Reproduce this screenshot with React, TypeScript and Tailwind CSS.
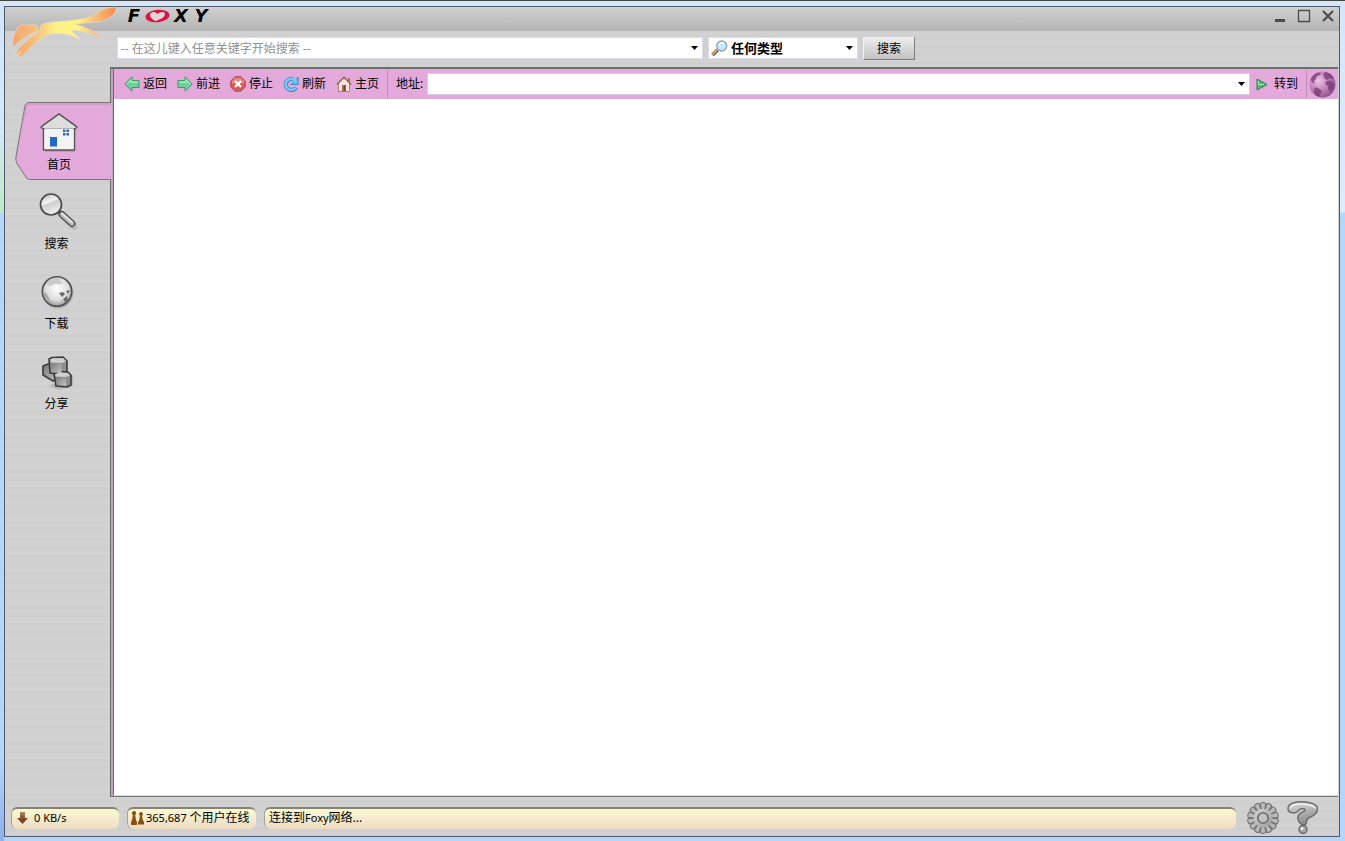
import type { ReactNode } from 'react';

function DropArrow() {
  return (
    <svg width="7" height="4" viewBox="0 0 7 4" aria-hidden="true">
      <path d="M0 0h7L3.500 4z" fill="#000" />
    </svg>
  );
}

function FoxLogo() {
  return (
    <svg width="112" height="56" viewBox="8 5 112 56" aria-hidden="true" className="absolute left-[3px] -top-0.5">
      <defs>
        <linearGradient id="fox" x1="12" x2="116" y1="0" y2="0" gradientUnits="userSpaceOnUse">
          <stop offset="0" stopColor="#f2a571" />
          <stop offset="0.22" stopColor="#f6bf78" />
          <stop offset="0.42" stopColor="#fdf288" />
          <stop offset="0.64" stopColor="#fff27e" />
          <stop offset="0.8" stopColor="#f9bd78" />
          <stop offset="1" stopColor="#f58d52" />
        </linearGradient>
      </defs>
      <g fill="url(#fox)" stroke="#e0d8ce" strokeWidth="1.400" paintOrder="stroke" strokeLinejoin="round">
        <path d="M13 47C12 40 16 29 20 26c3-2.500 7-2 6.500.5C30 24 36 24 38 27c.5 3-2 5-5 6-8 3-14 8-20 14z" />
        <path d="M39.500 32c2-3-.5-5.500 3-7.500 6-2.500 20-2.500 30-4 10-1 19-2.500 25-7C103 9 107 7.500 116 7.500c-.5 3-1 5-3 7-5 5-12 7-20 7.500-6 .5-12 1-19 1.800 10 3.500 20 7 28.500 14.700-9-5-19-8-29-8.500-2 0-2 1.500-.5 3 2 2 5 4 6.500 6.200-8-4.500-16-6.700-25-6-7 .8-12 3-17 8C31 46 27 53 19 58c.5-3 1.500-5.500 3-8l-6 5c1-4 3-7 6-10 5-5 11-9 17.500-13z" />
      </g>
    </svg>
  );
}

function Wordmark() {
  return (
    <a href="#foxy" aria-label="FOXY" className="flex items-center h-[18px] gap-0.5 pl-1.5 font-['DejaVu_Sans'] text-lg/[18px] font-bold italic text-black">
      <span className="w-[18px] text-center">F</span>
      <svg width="25" height="14" viewBox="0 0 25 14" aria-hidden="true">
        <ellipse cx="12.500" cy="7" rx="12" ry="6.200" fill="#dc1446" transform="rotate(-6 12.500 7)" />
        <path d="M10.500 12C5 9 4 6 6 4c2-2 5-1 6.500 1 2-2 6-3 7-1 2 3-3 6-9 8z" fill="#e4d6d9" />
      </svg>
      <span className="w-[18px] text-center">X</span>
      <span className="w-[18px] text-center">Y</span>
    </a>
  );
}

function HouseIcon() {
  return (
    <svg width="40" height="40" viewBox="0 0 40 40" aria-hidden="true">
      <path d="M5 14h30v25H5z" fill="#000" opacity=".12" transform="translate(1 1)" />
      <path d="M4.500 13 20 2l15.500 11v25h-31z" fill="#f4f4f4" stroke="#555" strokeWidth="1.500" strokeLinejoin="round" />
      <path d="M20 2 2 15l2 2h32l2-2z" fill="#ddd" stroke="#555" strokeWidth="1.500" strokeLinejoin="round" />
      <path d="M5.500 16.500h29V37h-29z" fill="#f3f3f3" />
      <path d="M11 25h7v9.500h-7z" fill="#2268c8" />
      <path d="M24 17.500h2.500V20H24zM27.500 17.500H30V20h-2.500zM24 21h2.500v2.500H24zM27.500 21H30v2.500h-2.500z" fill="#2268c8" />
    </svg>
  );
}

function MagnifierIcon() {
  return (
    <svg width="40" height="40" viewBox="0 0 40 40" aria-hidden="true">
      <defs>
        <linearGradient id="lens" x1="0" x2="0.400" y1="0" y2="1">
          <stop offset="0" stopColor="#b5b5b5" />
          <stop offset=".45" stopColor="#f4f4f4" />
          <stop offset=".55" stopColor="#cfcfcf" />
          <stop offset="1" stopColor="#eee" />
        </linearGradient>
      </defs>
      <path d="m26 25 11 10" stroke="#000" opacity=".1" strokeWidth="6" strokeLinecap="round" />
      <path d="m21 19 5 4" stroke="#4c4c4c" strokeWidth="4" />
      <path d="m25 22.500 10 9" stroke="#4c4c4c" strokeWidth="7" strokeLinecap="round" />
      <path d="m25 22.500 10 9" stroke="#b4b4b4" strokeWidth="4.400" strokeLinecap="round" />
      <path d="m25 21.500 10 9" stroke="#eee" strokeWidth="1.600" strokeLinecap="round" />
      <circle cx="14" cy="12.500" r="10.500" fill="url(#lens)" stroke="#4c4c4c" strokeWidth="1.700" />
    </svg>
  );
}

function GlobeIcon() {
  return (
    <svg width="40" height="40" viewBox="0 0 40 40" aria-hidden="true">
      <defs>
        <radialGradient id="globe" cx=".5" cy=".4" r=".65">
          <stop offset="0" stopColor="#fff" />
          <stop offset=".6" stopColor="#ddd" />
          <stop offset="1" stopColor="#888" />
        </radialGradient>
      </defs>
      <circle cx="21" cy="21" r="15.500" fill="#000" opacity=".15" />
      <circle cx="20" cy="19.500" r="14.700" fill="url(#globe)" stroke="#4f4f4f" strokeWidth="1.600" />
      <path d="M6.500 20c3 0 5 4 6 8 2 3 4 4 6 5-6 0-12-5-12-13z" fill="#aaa" />
      <path d="M9 12c4-5 9-7 15-6-2 3-1 4 2 5-4 3-6 0-9 1-3 2-5 2-8 0z" fill="#cacaca" />
      <path d="m22 21 4-1 2 2-3 3zM29 19l4-1-2 4zM26 27l4-3 1 4-3 2z" fill="#6b6b6b" />
    </svg>
  );
}

function CubesIcon() {
  return (
    <svg width="40" height="40" viewBox="0 0 40 40" aria-hidden="true">
      <defs>
        <linearGradient id="cube" x1="0" x2="1" y1="0" y2="1">
          <stop offset="0" stopColor="#777" />
          <stop offset="1" stopColor="#c4c4c4" />
        </linearGradient>
      </defs>
      <path d="m12 34 10 4 14-4V23z" fill="#000" opacity=".12" />
      <g stroke="#3c3c3c" strokeWidth="1.600" strokeLinejoin="round">
        <path d="m6 14 5-2 9 2v13l-4 2-10-6z" fill="url(#cube)" />
        <path d="m12 7 3-1.500 11-.5 4 4v12l-4 2-13-2z" fill="#8f8f8f" />
        <path d="m17 22 5-2.500 9 .5 3 3v10l-4 2-11-1z" fill="#8f8f8f" />
      </g>
      <path d="m13 7.500 3-1.200 10-.3 3 3-4 2-11-.5z" fill="#cfcfcf" />
      <path d="m13.500 11 11 1v9.500l-10-1.500z" fill="url(#cube)" />
      <path d="m18 22.500 4.500-2 8 .5 2.500 2.200-4 1.800-10-.5z" fill="#cfcfcf" />
      <path d="m18.500 25 10.500 1v7.800l-9-1z" fill="url(#cube)" />
    </svg>
  );
}

function PlainArrow({ flip = false }: { flip?: boolean }) {
  return (
    <svg width="16" height="16" viewBox="0 0 16 16" aria-hidden="true" className={flip ? '-scale-x-100' : ''}>
      <path d="M.800 8 8 .800V4.500h7v7H8v3.700z" fill="#6fd09c" stroke="#3b9c66" strokeLinejoin="round" />
      <path d="M2.800 8 7 3.700V6h7" fill="none" stroke="#c4f3d6" />
    </svg>
  );
}

function StopIcon() {
  return (
    <svg width="16" height="16" viewBox="0 0 16 16" aria-hidden="true">
      <path d="M5 .800h6L15.200 5v6L11 15.200H5L.800 11V5z" fill="#d65a5a" stroke="#b04a4a" strokeLinejoin="round" />
      <path d="M5.200 1.800h5.600L14 5v2.500H2V5z" fill="#ee9a94" opacity=".7" />
      <path d="m5 5 6 6m0-6-6 6" stroke="#fff" strokeWidth="2.400" />
    </svg>
  );
}

function RefreshIcon() {
  return (
    <svg width="16" height="16" viewBox="0 0 16 16" aria-hidden="true">
      <path d="M13 11.500A5.500 5.500 0 1 1 10.500 3.300" fill="none" stroke="#3f8dc8" strokeWidth="4.400" />
      <path d="M15.200 1v7.500H8z" fill="#6fbcec" stroke="#3f8dc8" strokeLinejoin="round" />
      <path d="M12.400 11.900A5.500 5.500 0 1 1 10.500 3.300l2.500 2" fill="none" stroke="#7cc6f0" strokeWidth="2.600" />
    </svg>
  );
}

function SmallHomeIcon() {
  return (
    <svg width="16" height="16" viewBox="0 0 16 16" aria-hidden="true">
      <path d="M12 2h2v4h-2z" fill="#b06a5c" />
      <path d="M2.500 7 8 2l5.500 5v8.500h-11z" fill="#f7e6d4" stroke="#a58473" />
      <path d="M.800 8.500 8 1.300l7.200 7.200" fill="none" stroke="#8b6a60" strokeWidth="1.500" />
      <path d="M6 9h4v6.500H6z" fill="#b3625a" />
      <path d="M8 9h1.500v6H8z" fill="#6e4a42" />
    </svg>
  );
}

function TypeIcon() {
  return (
    <svg width="17" height="17" viewBox="0 0 17 17" aria-hidden="true">
      <path d="m1.500 15 5-5" stroke="#5b4a4b" strokeWidth="3.600" />
      <path d="m1.500 14.500 4.500-4.500" stroke="#efa34b" strokeWidth="1.800" />
      <circle cx="10.700" cy="6" r="5" fill="#c6e8fb" stroke="#8ba0c0" strokeWidth="1.300" />
      <path d="M7.500 5.500c1-3 4-3.500 5.500-2" fill="none" stroke="#fff" strokeWidth="1.400" />
    </svg>
  );
}

function PinkGlobe() {
  return (
    <svg width="27" height="27" viewBox="0 0 27 27" aria-hidden="true">
      <defs>
        <radialGradient id="pinkGlobe" cx=".35" cy=".35" r=".75">
          <stop offset="0" stopColor="#edc3e6" />
          <stop offset=".5" stopColor="#c384bb" />
          <stop offset="1" stopColor="#844a80" />
        </radialGradient>
      </defs>
      <circle cx="13.500" cy="13.500" r="13" fill="url(#pinkGlobe)" />
      <path
        d="M1.500 9c1-4 4-6.500 7.500-7.500L12 2l-1 2-3 1-1 3-2 2 1 3-3-2zM5 17l3-.5 4 2.500 1 2-2 2-1 3c-3-1-4-3-5-5zM14 3l3-2c4 1 6 3 8 6l-2 1-3-1-1 2-3-1-1-2zM17 10l5-.5 3 3.500-1 5-3 3-2-3v-3l-3-2z"
        fill="#71356e"
        opacity=".7"
      />
    </svg>
  );
}

function GearIcon() {
  const teeth = Array.from({ length: 14 }, (_, i) => (i * 360) / 14);

  return (
    <svg width="32" height="32" viewBox="0 0 32 32" aria-hidden="true">
      <defs>
        <linearGradient id="gear" x1="0" x2="1" y1="0" y2="1">
          <stop offset="0" stopColor="#d8d8d8" />
          <stop offset="1" stopColor="#9a9a9a" />
        </linearGradient>
      </defs>
      <circle cx="17" cy="17" r="14.500" fill="#000" opacity=".12" />
      {teeth.map((deg) => (
        <path
          key={deg}
          d="M14.800 10 13.200 2q.3-1.500 2.800-1.500T18.800 2l-1.600 8z"
          fill="#b9b9b9"
          stroke="#6c6c6c"
          strokeWidth="1"
          transform={`rotate(${deg} 16 16)`}
        />
      ))}
      <circle cx="16" cy="16" r="9.500" fill="url(#gear)" />
      <circle cx="16" cy="16" r="5.200" fill="#c4c4c4" stroke="#747474" strokeWidth="1.800" />
    </svg>
  );
}

function HelpIcon() {
  return (
    <svg width="32" height="34" viewBox="0 0 32 34" aria-hidden="true" strokeLinecap="round" strokeLinejoin="round">
      <defs>
        <linearGradient id="help" x1="0" x2=".3" y1="0" y2="1">
          <stop offset="0" stopColor="#dedede" />
          <stop offset="1" stopColor="#8c8c8c" />
        </linearGradient>
      </defs>
      <path
        d="M1 7.500C1 3 7 .8 14 .8c8 0 16.500 2 16.500 7 0 4-3.500 7-8 8.700-2.500 1-3 2.500-3 4.500 0 3.500-3.500 3.500-5.500 2-3.500-2.500-4.500-7.500-1-10.500 2-1.500 5-2 5-3.500 0-1.300-2.500-1.600-4.500-1C11.500 9 10.500 12 7 12c-4 0-6-2-6-4.500z"
        fill="url(#help)"
        stroke="#6a6a6a"
        strokeWidth="1.400"
      />
      <path d="M4 6c2-2.500 6-3.300 11-3 6 .3 11 1.500 13 4" fill="none" stroke="#f0f0f0" strokeWidth="1.500" />
      <circle cx="16" cy="28.500" r="4" fill="#a6a6a6" stroke="#666" strokeWidth="1.400" />
      <circle cx="15" cy="27.500" r="1.600" fill="#ececec" />
    </svg>
  );
}

const sections = [
  { id: 'search', label: '搜索', icon: <MagnifierIcon /> },
  { id: 'download', label: '下载', icon: <GlobeIcon /> },
  { id: 'share', label: '分享', icon: <CubesIcon /> },
];

const browserActions = [
  { id: 'back', label: '返回', icon: <PlainArrow /> },
  { id: 'forward', label: '前进', icon: <PlainArrow flip /> },
  { id: 'stop', label: '停止', icon: <StopIcon /> },
  { id: 'refresh', label: '刷新', icon: <RefreshIcon /> },
  { id: 'home', label: '主页', icon: <SmallHomeIcon /> },
];

function StatusField({ className, children }: { className: string; children: ReactNode }) {
  return (
    <div
      className={`flex items-center h-[22px] rounded-md border-t-2 border-l border-t-[#85856f] border-l-[#a5a595] bg-linear-to-b from-[#fbf8d2] to-[#eedcc4] pb-0.5 ${className}`}
    >
      {children}
    </div>
  );
}

function TitleBar() {
  return (
    <div className="flex justify-between h-6 bg-linear-to-b from-[#d0d0d0] to-[#b4b4b4] pl-[114px] pr-1">
      <Wordmark />
      <div className="flex items-center h-[18px] gap-2.5 text-[#4c4c4c]">
        <button type="button" aria-label="Minimize">
          <svg width="14" height="14" viewBox="0 0 14 14">
            <path d="M2 10h10v3H2z" fill="currentColor" />
          </svg>
        </button>
        <button type="button" aria-label="Maximize">
          <svg width="14" height="14" viewBox="0 0 14 14">
            <path d="M1.500 1.500h11v11h-11z" fill="none" stroke="currentColor" strokeWidth="1.300" />
          </svg>
        </button>
        <button type="button" aria-label="Close">
          <svg width="14" height="14" viewBox="0 0 14 14">
            <path d="m2 2 10 10M12 2 2 12" stroke="currentColor" strokeWidth="2.200" />
          </svg>
        </button>
      </div>
    </div>
  );
}

function SearchBar() {
  return (
    <form className="flex items-start h-9 gap-[5px] pl-28 pt-1.5" onSubmit={(e) => e.preventDefault()}>
      <div className="flex items-center w-[586px] h-[22px] bg-white border border-[#dcdce6] pr-1">
        <input
          aria-label="搜索"
          placeholder="-- 在这儿键入任意关键字开始搜索 --"
          className="flex-1 min-w-0 h-5 pl-[3px] outline-none placeholder:text-[#919191]"
        />
        <DropArrow />
      </div>
      <div className="flex items-center w-[150px] h-[22px] bg-white border border-[#dcdce6] pl-0.5 pr-1">
        <TypeIcon />
        <select aria-label="类型" className="flex-1 h-5 pl-[3px] appearance-none text-[13px] font-bold outline-none">
          <option>任何类型</option>
        </select>
        <DropArrow />
      </div>
      <button
        type="submit"
        className="w-[52px] h-[23px] border border-t-[#f2f2f2] border-l-[#f2f2f2] border-b-[#7e7e7e] border-r-[#7e7e7e] bg-linear-to-b from-[#ececec] to-[#c3c3c3]"
      >
        搜索
      </button>
    </form>
  );
}

function Sidebar() {
  return (
    <nav className="flex flex-col gap-0.5 w-[105px] shrink-0 pt-[35px]">
      <button type="button" className="relative flex flex-col items-center h-[78px] pt-2.5 pl-[3px]" aria-current="page">
        <svg width="97" height="78" viewBox="0 0 97 78" aria-hidden="true" className="absolute left-2.5 top-0">
          <path d="M97 .5H14q-3 0-4 3L.800 56q0 3 1 5l9 14q1 2.500 4 2.500H97z" fill="#e3a9db" />
          <path d="M96 .5H14q-3 0-4 3L.800 56q0 3 1 5l9 14q1 2.500 4 2.500h81" fill="none" stroke="#777" />
          <path d="M96 2H15q-3 0-4 3l-3 14" fill="none" stroke="#c98fc2" />
        </svg>
        <span className="relative flex flex-col items-center gap-1">
          <HouseIcon />
          <span>首页</span>
        </span>
      </button>
      {sections.map((section) => (
        <button key={section.id} type="button" className="flex flex-col items-center gap-[3px] h-[78px] pt-2.5 pr-0.5">
          {section.icon}
          <span>{section.label}</span>
        </button>
      ))}
    </nav>
  );
}

function BrowserBar() {
  return (
    <div className="flex items-center h-[30px] shrink-0 bg-[#e3a9db] pl-2.5 pr-0.5">
      <div className="flex items-center gap-2.5">
        {browserActions.map((action) => (
          <button key={action.id} type="button" className="flex items-center gap-[3px]">
            {action.icon}
            <span>{action.label}</span>
          </button>
        ))}
      </div>
      <div className="w-px h-7 ml-2 mr-2 bg-[#c489bc]" />
      <label htmlFor="address">地址:</label>
      <div className="flex items-center flex-1 h-[22px] ml-1 bg-white border border-[#d8cde0] pr-1">
        <input id="address" className="flex-1 min-w-0 h-5 px-1 outline-none" />
        <DropArrow />
      </div>
      <button type="button" className="flex items-center gap-1.5 ml-1.5 mr-2">
        <svg width="12" height="13" viewBox="0 0 12 13" aria-hidden="true">
          <path d="M1 1v11l10-5.500z" fill="#4fbb76" stroke="#25874c" strokeLinejoin="round" />
          <path d="M2.500 3v3.500H8" fill="none" stroke="#a3e6bc" />
        </svg>
        转到
      </button>
      <div className="w-px h-7 mr-0.5 bg-[#c489bc]" />
      <PinkGlobe />
    </div>
  );
}

function StatusBar() {
  return (
    <footer className="flex items-center gap-2 h-[39px] pl-1.5 pr-5 pt-0.5">
      <StatusField className="w-[108px] gap-1.5 pl-[5px]">
        <svg width="11" height="12" viewBox="0 0 11 12" aria-hidden="true">
          <defs>
            <linearGradient id="down" x1="0" x2="0" y1="0" y2="1">
              <stop offset="0" stopColor="#b08a64" />
              <stop offset=".6" stopColor="#7b4321" />
            </linearGradient>
          </defs>
          <path d="M3 0h5v6h3l-5.500 6L0 6h3z" fill="url(#down)" />
        </svg>
        <span className="text-[11px]">0 KB/s</span>
      </StatusField>
      <StatusField className="w-[129px] gap-0.5 pl-[3px]">
        <svg width="13" height="14" viewBox="0 0 13 14" aria-hidden="true" fill="#8a5210">
          <path d="M3 0a2.200 2.200 0 0 1 1.200 4L5 9l1 2v3H0v-3l1-2 .800-5A2.200 2.200 0 0 1 3 0z" />
          <path d="M10 1a2 2 0 0 1 1 3.700l.8 4.300 1.200 2v2.500H7V11l1.200-2L9 4.700A2 2 0 0 1 10 1z" />
        </svg>
        <span>
          <span className="text-[11px]">365,687 </span>个用户在线
        </span>
      </StatusField>
      <StatusField className="flex-1 pl-1">
        <span>
          连接到<span className="text-[11px]">Foxy</span>网络...
        </span>
      </StatusField>
      <div className="flex items-center gap-2 pl-[3px]">
        <button type="button" aria-label="Settings">
          <GearIcon />
        </button>
        <button type="button" aria-label="Help">
          <HelpIcon />
        </button>
      </div>
    </footer>
  );
}

export default function App() {
  return (
    <div className="flex flex-col min-h-screen bg-[linear-gradient(to_bottom,#d2e5fb_0px,#d5e8fb_120px,#bfeac5_211px,#b3d6fb_213px,#b3d6fb_90%,#8fb0ea_100%)] border-t border-[#444] font-['Noto_Sans','Noto_Sans_CJK_SC',sans-serif] text-xs/[18px] text-black">
      <div className="flex flex-col flex-1 ml-1 bg-[linear-gradient(to_bottom,#d5e7fb_0px,#dcecfc_211px,#b3d6fb_212px,#b3d6fb_100%)] pt-[5px] pr-[5px] pb-1">
        <div className="relative flex flex-col flex-1 border border-[#4e5a69] bg-[repeating-linear-gradient(to_bottom,#d0d0d0_0px,#d3d3d3_3px,#cecece_5px,#d2d2d2_9px,#cfcfcf_13px,#d1d1d1_17px)]">
          <TitleBar />
          <SearchBar />
          <FoxLogo />
          <div className="flex flex-1 pr-px">
            <Sidebar />
            <main className="flex flex-col flex-1 min-w-0 border-t-2 border-t-[#6e6e6e] border-l border-l-[#707070] border-b border-b-[#777] bg-[#c0a3bd] pl-0.5">
              <div className="flex flex-col flex-1 border-l border-l-[#6c6c6c] border-b border-b-[#d8d8d8] bg-white">
                <BrowserBar />
              </div>
            </main>
          </div>
          <StatusBar />
        </div>
      </div>
    </div>
  );
}
